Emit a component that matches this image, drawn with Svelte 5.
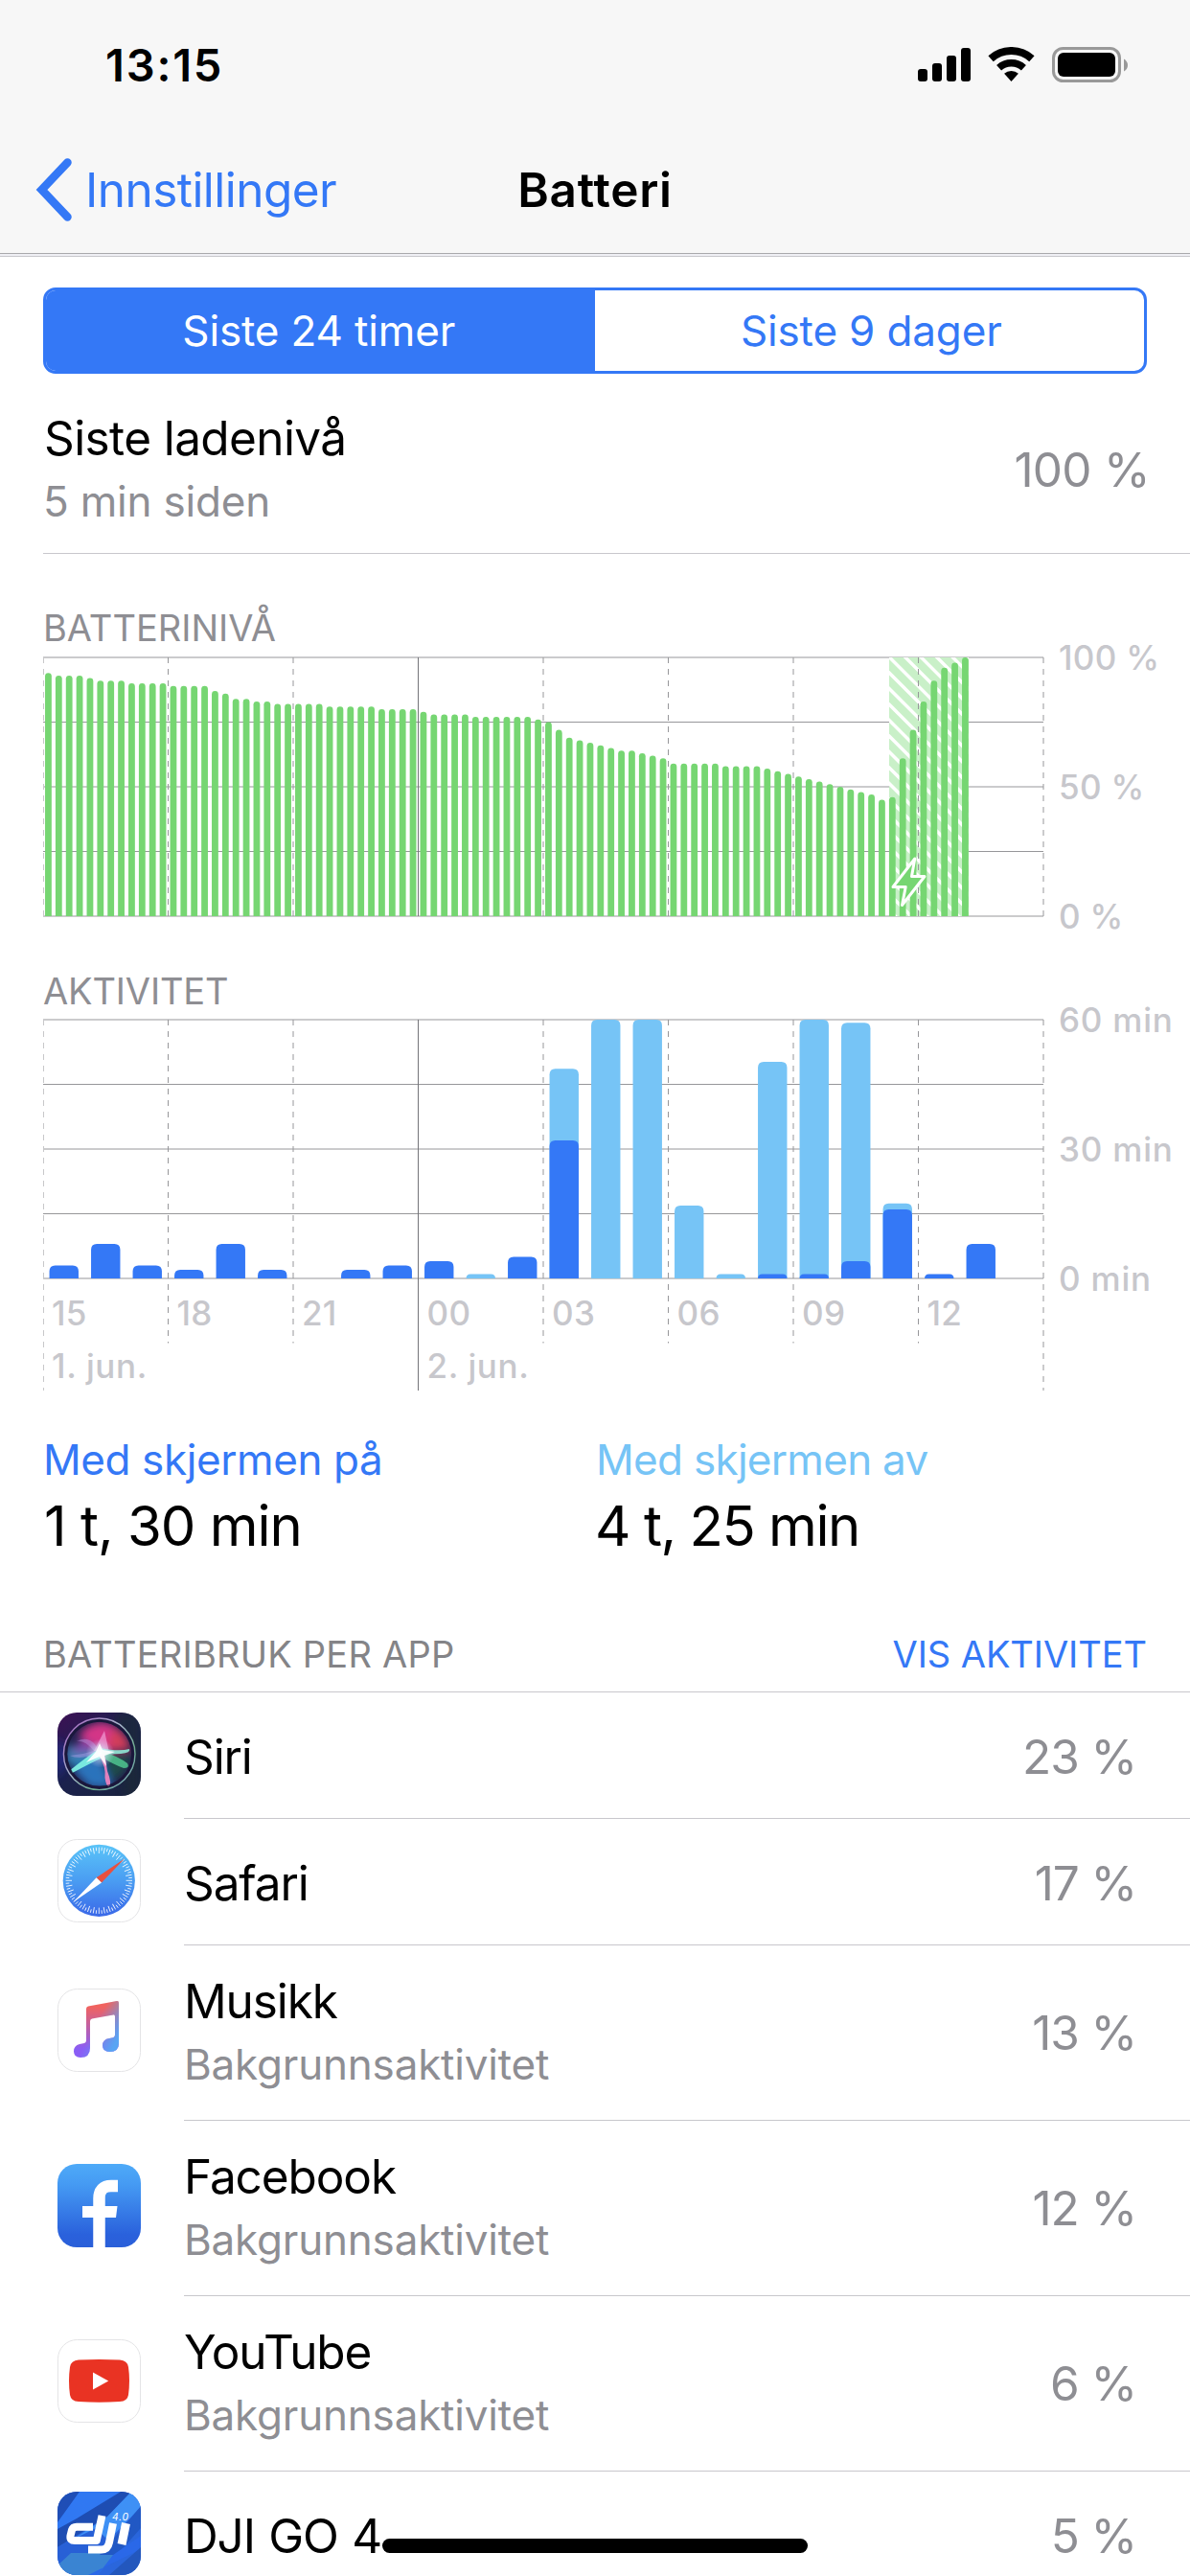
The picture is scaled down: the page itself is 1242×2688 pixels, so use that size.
<script>
	const LEFT = 45;
	const WIDTH = 1044;
	const HEIGHT = 270;

	// [level in percent, number of quarter-hours it lasted]
	const levelRuns = [
		[94, 1], [93, 3], [92, 1], [91, 3], [90, 4], [89, 4], [87, 1], [86, 1],
		[84, 2], [83, 2], [82, 5], [81, 5], [80, 4], [79, 1], [78, 4], [77, 6],
		[76, 1], [75, 1], [72, 1], [69, 1], [68, 1], [67, 1], [66, 1], [65, 1],
		[64, 2], [63, 1], [62, 1], [61, 1], [59, 5], [58, 4], [57, 1], [56, 1],
		[55, 1], [54, 1], [53, 1], [52, 1], [51, 1], [50, 1], [49, 1], [48, 1],
		[47, 1], [45, 1], [46, 1], [61, 1], [72, 1], [83, 1], [91, 1], [96, 1],
		[98, 1], [100, 1]
	];
	const levels = levelRuns.flatMap(([level, n]) => Array(n).fill(level));
	const slot = WIDTH / 96;
	const chargeStart = 928;
	const chargeEnd = 1011;

	// minutes per hour, starting at 15:00. total includes time with the screen off
	const activity = [
		{ on: 3, total: 3 },
		{ on: 8, total: 8 },
		{ on: 3, total: 3 },
		{ on: 2, total: 2 },
		{ on: 8, total: 8 },
		{ on: 2, total: 2 },
		{ on: 0, total: 0 },
		{ on: 2, total: 2 },
		{ on: 3, total: 3 },
		{ on: 4, total: 4 },
		{ on: 0, total: 1 },
		{ on: 5, total: 5 },
		{ on: 32, total: 48.6 },
		{ on: 0, total: 60 },
		{ on: 0, total: 60 },
		{ on: 0, total: 16.9 },
		{ on: 0, total: 1 },
		{ on: 1, total: 50.2 },
		{ on: 1, total: 60 },
		{ on: 4, total: 59.3 },
		{ on: 16, total: 17.4 },
		{ on: 1, total: 1 },
		{ on: 8, total: 8 }
	];
	const hourSlot = WIDTH / 24;

	const hours = ['15', '18', '21', '00', '03', '06', '09', '12'];
	const gridX = Array.from({ length: 9 }, (_, i) => LEFT + i * 130.5);

	const apps = [
		{ id: 'siri', name: 'Siri', share: 23 },
		{ id: 'safari', name: 'Safari', share: 17 },
		{ id: 'music', name: 'Musikk', share: 13, background: true },
		{ id: 'facebook', name: 'Facebook', share: 12, background: true },
		{ id: 'youtube', name: 'YouTube', share: 6, background: true },
		{ id: 'dji', name: 'DJI GO 4', share: 5 }
	];

	// bar with rounded top corners, standing on the base line
	function bar(x, base, w, h, radius) {
		const r = Math.min(radius, w / 2, h);
		const top = base - h;
		return `M${x} ${base}V${top + r}Q${x} ${top} ${x + r} ${top}H${x + w - r}Q${x + w} ${top} ${x + w} ${top + r}V${base}Z`;
	}
</script>

{#snippet rows(top)}
	{#each [0, 1, 2, 3, 4] as i}
		<line class="grid-line" x1={LEFT} x2={LEFT + WIDTH} y1={top + i * 67.5} y2={top + i * 67.5} />
	{/each}
{/snippet}

{#snippet columns(top, end, outerEnd)}
	{#each gridX as x, i}
		{#if i === 0}
			<line class="grid-dash first" x1={x + 0.5} x2={x + 0.5} y1={top} y2={outerEnd} />
		{:else if i !== 3}
			<line class="grid-dash" x1={x} x2={x} y1={top} y2={i === 8 ? outerEnd : end} />
		{/if}
	{/each}
{/snippet}

<div class="screen">
	<header>
		<div class="status-bar">
			<span class="time">13:15</span>
			<svg width="219" height="38" viewBox="0 0 219 38">
				<rect x="0" y="23" width="10" height="13" rx="3" />
				<rect x="15" y="17" width="10" height="19" rx="3" />
				<rect x="30" y="9" width="10" height="27" rx="3" />
				<rect x="45" y="1" width="10" height="35" rx="3" />
				<g transform="translate(73 0)">
					<path d="M3.1 12.2A32 32 0 0 1 45.9 12.2" fill="none" stroke="#000" stroke-width="8" />
					<path d="M11.6 21.7A19.3 19.3 0 0 1 37.4 21.7" fill="none" stroke="#000" stroke-width="7.5" />
					<path d="M24.5 36L17.1 27.8A11 11 0 0 1 31.9 27.8Z" />
				</g>
				<rect x="141.5" y="1.5" width="69" height="34" rx="10" fill="none" stroke="#999" stroke-width="3" />
				<rect x="146" y="6" width="60" height="25" rx="6" />
				<path d="M215 12.5Q219 15 219 19T215 25.5Z" fill="#999" />
			</svg>
		</div>
		<nav>
			<div class="back">
				<svg width="40" height="66" viewBox="0 0 40 66">
					<path d="M33.5 4.5L6.5 33L33.5 61.5" fill="none" stroke="#3478f6" stroke-width="8.5" stroke-linecap="round" />
				</svg>
				<span>Innstillinger</span>
			</div>
			<h1>Batteri</h1>
			<div></div>
		</nav>
	</header>
	<div class="header-gap"></div>

	<div class="segmented">
		<div class="segment active">Siste 24 timer</div>
		<div class="segment">Siste 9 dager</div>
	</div>

	<section class="last-charge">
		<div>
			<div class="title">Siste ladenivå</div>
			<div class="subtitle">5 min siden</div>
		</div>
		<div class="value">100 %</div>
	</section>

	<section class="charts">
		<h2>BATTERINIVÅ</h2>
		<svg class="chart" width="1242" height="300" viewBox="0 0 1242 300">
			<defs>
				<clipPath id="charging">
					<rect x={chargeStart} y="11" width={chargeEnd - chargeStart} height={HEIGHT} />
				</clipPath>
			</defs>
			{@render rows(11)}
			<g clip-path="url(#charging)">
				<rect x={chargeStart} y="11" width={chargeEnd - chargeStart} height={HEIGHT} fill="#c9f0c8" />
				{#each Array(22) as _, i}
					<line
						x1={chargeStart - 10}
						y1={-82 + i * 16.5}
						x2={chargeEnd + 10}
						y2={-62 + i * 16.5 + chargeEnd - chargeStart}
						stroke="#fff"
						stroke-width="3.4"
					/>
				{/each}
			</g>
			{@render columns(11, 281, 281)}
			{#each levels as level, i}
				<path class="level" d={bar(LEFT + (i + 0.5) * slot - 3.4, 281, 6.8, (level / 100) * HEIGHT, 3.4)} />
			{/each}
			<line class="midnight" x1="436.5" x2="436.5" y1="11" y2="281" />
			<path
				d="M954.8 221L951.5 239.5H965L941.5 269.5L945.2 250.5H932Z"
				fill="#76d672"
				stroke="#fff"
				stroke-width="3"
				stroke-linejoin="round"
			/>
			<text class="axis" x="1105" y="24">100 %</text>
			<text class="axis" x="1105" y="158.5">50 %</text>
			<text class="axis" x="1105" y="293.5">0 %</text>
		</svg>

		<h2 class="second">AKTIVITET</h2>
		<svg class="chart" width="1242" height="400" viewBox="0 0 1242 400">
			{@render rows(10)}
			{@render columns(10, 347.5, 397)}
			{#each activity as hour, i}
				{@const x = LEFT + (i + 0.5) * hourSlot - 15.2}
				{#if hour.total > hour.on}
					<path class="screen-off" d={bar(x, 280, 30.4, hour.total * 4.5, 6)} />
				{/if}
				{#if hour.on}
					<path class="screen-on" d={bar(x, 280, 30.4, hour.on * 4.5, 6)} />
				{/if}
			{/each}
			<line class="midnight" x1="436.5" x2="436.5" y1="10" y2="397" />
			<text class="axis minutes" x="1105" y="22.7">60 min</text>
			<text class="axis minutes" x="1105" y="157.5">30 min</text>
			<text class="axis minutes" x="1105" y="292.5">0 min</text>
			{#each hours as hour, i}
				<text class="axis" x={gridX[i] + 9} y="329">{hour}</text>
			{/each}
			<text class="axis date" x="54" y="384">1. jun.</text>
			<text class="axis date" x="445.5" y="384">2. jun.</text>
		</svg>
	</section>

	<section class="totals">
		<div>
			<div class="label on">Med skjermen på</div>
			<div class="amount">1 t, 30 min</div>
		</div>
		<div>
			<div class="label off">Med skjermen av</div>
			<div class="amount wide">4 t, 25 min</div>
		</div>
	</section>

	<div class="list-header">
		<span>BATTERIBRUK PER APP</span>
		<span class="link">VIS AKTIVITET</span>
	</div>

	<ul>
		{#each apps as app}
			<li class:tall={app.background}>
				<svg class="icon" width="87" height="87" viewBox="0 0 87 87">
					{#if app.id === 'siri'}
						<defs>
							<linearGradient id="siri-bg" x1="0.1" y1="0" x2="0.8" y2="1">
								<stop offset="0" stop-color="#3a1254" />
								<stop offset="0.45" stop-color="#1c2150" />
								<stop offset="1" stop-color="#1a2340" />
							</linearGradient>
							<linearGradient id="siri-ring" x1="0" y1="0" x2="1" y2="1">
								<stop offset="0" stop-color="#a65cc0" />
								<stop offset="0.45" stop-color="#a8b8cc" />
								<stop offset="0.7" stop-color="#6fae90" />
								<stop offset="1" stop-color="#7fa6c8" />
							</linearGradient>
							<radialGradient id="siri-glow">
								<stop offset="0" stop-color="#fff" stop-opacity="1" />
								<stop offset="0.35" stop-color="#d8f4ff" stop-opacity="0.7" />
								<stop offset="1" stop-color="#d8c8ff" stop-opacity="0" />
							</radialGradient>
							<filter id="siri-soft" x="-30%" y="-30%" width="160%" height="160%">
								<feGaussianBlur stdDeviation="4" />
							</filter>
							<clipPath id="siri-tile"><rect width="87" height="87" rx="20" /></clipPath>
							<clipPath id="siri-disc"><circle cx="43.7" cy="43.3" r="33.5" /></clipPath>
						</defs>
						<g clip-path="url(#siri-tile)">
							<rect width="87" height="87" fill="url(#siri-bg)" />
							<path d="M87 0V87H70L60 0Z" fill="#1c2b38" opacity="0.7" filter="url(#siri-soft)" />
							<path d="M0 25L12 45L0 70Z" fill="#242a86" filter="url(#siri-soft)" />
						</g>
						<circle cx="43.7" cy="43.3" r="37" fill="#1d1a40" />
						<g clip-path="url(#siri-disc)">
							<rect width="87" height="87" fill="#22204e" />
							<g filter="url(#siri-soft)">
								<path d="M22 24Q34 8 52 11Q72 18 76 38L48 42Z" fill="#d43487" />
								<path d="M58 16Q74 24 76 39L52 38Z" fill="#d23e58" />
								<path d="M10 34L44 42L24 58L8 52Z" fill="#2a83b4" />
								<path d="M16 60L44 44L58 78H34Z" fill="#2a73bc" />
								<path d="M48 44L78 44L68 64L56 72Z" fill="#1f4c48" />
								<path d="M26 28L44 40L12 44Z" fill="#7e4cae" />
							</g>
						</g>
						<path d="M20 30Q36 22 44 42Q24 50 13 45Q26 44 38 40Q28 28 20 30Z" fill="#b9a0ee" opacity="0.4" />
						<path d="M49 19L54 42L38 40Z" fill="#f3a6dc" opacity="0.65" />
						<path d="M44 37Q64 41 75 38Q77 42 66 43Q54 43 44 46Z" fill="#8ff2dd" opacity="0.85" />
						<path d="M42 39Q32 45 14 59.5L15.5 63Q34 53 47 47Z" fill="#7deee2" opacity="0.95" />
						<path d="M46 40Q64 46 73 53Q76 58 69 58Q58 54 45 46Z" fill="#4fc48f" opacity="0.85" />
						<path d="M43 44Q51 57 49.5 68Q51 78 54 77Q57 74 52 61Q51 52 49 43Z" fill="#ec83bf" opacity="0.95" />
						<circle cx="44.5" cy="42.5" r="15" fill="url(#siri-glow)" opacity="0.85" />
						<path d="M44 32L47 39L60 41L49 45L51 56L44 46L30 52L40 41Z" fill="#fff" opacity="0.9" />
						<circle cx="43.7" cy="43.3" r="37.3" fill="none" stroke="url(#siri-ring)" stroke-width="1.4" />
						<circle cx="43.7" cy="43.3" r="34.5" fill="none" stroke="#191638" stroke-width="2" opacity="0.6" />
					{:else if app.id === 'safari'}
						<defs>
							<linearGradient id="safari-bg" x1="0" y1="0" x2="0" y2="1">
								<stop offset="0" stop-color="#5ac4f8" />
								<stop offset="0.5" stop-color="#4a9df2" />
								<stop offset="1" stop-color="#3a68e8" />
							</linearGradient>
						</defs>
						<rect class="tile" x="0.5" y="0.5" width="86" height="86" rx="20" />
						<circle cx="43.3" cy="43.3" r="37.6" fill="url(#safari-bg)" />
						{#each Array(72) as _, i}
							<line
								x1="43.3"
								x2="43.3"
								y1="8.6"
								y2={i % 2 ? 12.2 : 15}
								stroke="#fff"
								stroke-width="0.9"
								opacity="0.9"
								transform="rotate({i * 5} 43.3 43.3)"
							/>
						{/each}
						<path d="M70 20.5L40.6 40.2L46 45.5Z" fill="#e9503f" />
						<path d="M16.5 65.8L40.6 40.2L46 45.5Z" fill="#fff" />
					{:else if app.id === 'music'}
						<defs>
							<linearGradient id="music-a" gradientUnits="userSpaceOnUse" x1="0" y1="13" x2="0" y2="72">
								<stop offset="0.1" stop-color="#f1635f" />
								<stop offset="0.55" stop-color="#b25fb8" />
								<stop offset="0.85" stop-color="#8a5df5" />
							</linearGradient>
							<linearGradient id="music-b" gradientUnits="userSpaceOnUse" x1="25" y1="65" x2="49.4" y2="77.9">
								<stop offset="0" stop-color="#58a5f3" stop-opacity="0" />
								<stop offset="1" stop-color="#58a5f3" />
							</linearGradient>
						</defs>
						<rect class="tile" x="0.5" y="0.5" width="86" height="86" rx="20" />
						{#each ['a', 'b'] as layer}
							<path
								d="M30 21Q30 19 32 18.5L62 13Q64 12.7 64 15V57Q64 66 54.5 66Q47 66 47 59.5Q47 53 54 52L58 51.2Q60 50.8 60 48.5V29Q60 27 58 27.4L36 31.5Q34 32 34 34V62Q34 72 24 72Q17 72 17 65.5Q17 59.5 23 58L28 57Q30 56.5 30 54Z"
								fill="url(#music-{layer})"
							/>
						{/each}
					{:else if app.id === 'facebook'}
						<defs>
							<linearGradient id="facebook-bg" x1="0" y1="0" x2="0" y2="1">
								<stop offset="0" stop-color="#4eaaf8" />
								<stop offset="0.25" stop-color="#459af3" />
								<stop offset="0.85" stop-color="#2a61dc" />
								<stop offset="1" stop-color="#2a5fd9" />
							</linearGradient>
						</defs>
						<rect width="87" height="87" rx="20" fill="url(#facebook-bg)" />
						<path d="M43.5 87V36Q43.5 23 56 23H63" fill="none" stroke="#fff" stroke-width="12.5" />
						<path d="M26 44H62.5L61 56H26Z" fill="#fff" />
					{:else if app.id === 'youtube'}
						<rect class="tile" x="0.5" y="0.5" width="86" height="86" rx="20" />
						<path
							d="M22 21.5Q43.5 20.5 65 21.5Q73 22 74 29Q76 43 74 58Q73 64.5 65 65Q43.5 66.5 22 65Q14 64.5 13 58Q11 43 13 29Q14 22 22 21.5Z"
							fill="#e93323"
						/>
						<path d="M37 34.5L53.2 43.5L37 52.5Z" fill="#fff" />
					{:else}
						<defs>
							<clipPath id="dji-tile"><rect width="87" height="87" rx="20" /></clipPath>
						</defs>
						<g clip-path="url(#dji-tile)">
							<rect width="87" height="87" fill="#2a66dc" />
							<path d="M0 0H23L0 34Z" fill="#1f4eb6" />
							<path d="M23 0H68L20 30L0 40V32Z" fill="#3078f2" />
							<path d="M66 0H77L52 26L0 58V39L20 28Z" fill="#1e4db2" />
							<path d="M77 0H87V16L50 54H10L52 26Z" fill="#3e90f5" />
							<path d="M0 58L40 38L58 56L34 87H0Z" fill="#2860d6" />
							<path d="M0 77L14 64H60L42 87H0Z" fill="#3a84d2" />
							<path d="M87 15V38L62 66H44Z" fill="#2158c4" />
							<path d="M58 66L87 46V60L32 87H42Z" fill="#2a68e8" />
							<path d="M87 58V87H54Z" fill="#2357bd" />
						</g>
						<g fill="none" stroke="#fff">
							<path d="M46.5 25L40.8 51H18Q12.5 51 13.5 46L15 40Q16 36.8 20 36.8H37" stroke-width="8" stroke-linejoin="round" />
							<path d="M58 33L54 53Q52.5 60.5 46 60.5H32" stroke-width="8" />
							<path d="M71.5 33L67 55" stroke-width="9" />
						</g>
						<text class="dji-version" x="57" y="30">4.0</text>
					{/if}
				</svg>
				<div class="row">
					<div>
						<div class="name">{app.name}</div>
						{#if app.background}
							<div class="subtitle">Bakgrunnsaktivitet</div>
						{/if}
					</div>
					<div class="value share">{app.share} %</div>
				</div>
			</li>
		{/each}
	</ul>

	<div class="home-indicator"></div>
</div>

<style>
	:global(body) {
		margin: 0;
		background: #fff;
	}

	.screen {
		position: relative;
		width: 1242px;
		height: 2688px;
		overflow: hidden;
		background: #fff;
		color: #000;
		font-family: Inter, 'Liberation Sans', sans-serif;
		font-size: 49.5px;
	}

	header {
		height: 264px;
		background: #f7f7f7;
		border-bottom: 1px solid #a9a9ac;
	}

	.header-gap {
		height: 2px;
		background: #efeff4;
		border-bottom: 1px solid #c8c7cc;
	}

	.status-bar {
		box-sizing: border-box;
		height: 132px;
		padding: 4px 65px 0 110px;
		display: flex;
		align-items: center;
		justify-content: space-between;
	}

	.time {
		margin-top: -2px;
		font-size: 47px;
		font-weight: 600;
		letter-spacing: 1.8px;
	}

	nav {
		height: 132px;
		display: grid;
		grid-template-columns: 1fr auto 1fr;
		align-items: center;
	}

	.back {
		display: flex;
		align-items: center;
		gap: 12px;
		padding-left: 37px;
		color: #3478f6;
		letter-spacing: -0.54px;
	}

	h1 {
		margin: 0;
		font-size: 49.5px;
		font-weight: 600;
		letter-spacing: 0.75px;
	}

	.segmented {
		box-sizing: border-box;
		height: 90px;
		margin: 32px 45px 0;
		display: flex;
		border: 3px solid #3478f6;
		border-radius: 13px;
		overflow: hidden;
	}

	.segment {
		box-sizing: border-box;
		flex: 1;
		display: flex;
		align-items: center;
		justify-content: center;
		padding-left: 4px;
		font-size: 44px;
		letter-spacing: -0.15px;
		color: #3478f6;
	}

	.segment.active {
		padding: 0 3px 0 0;
		background: #3478f6;
		color: #fff;
	}

	.last-charge {
		box-sizing: border-box;
		height: 188px;
		margin-left: 45px;
		padding: 12px 42px 0 0;
		display: flex;
		align-items: center;
		justify-content: space-between;
		border-bottom: 1px solid #c8c7cc;
	}

	.title {
		line-height: 66px;
		letter-spacing: -0.6px;
		padding-left: 1px;
	}

	.subtitle {
		font-size: 44px;
		line-height: 66px;
		letter-spacing: -0.2px;
		color: #8e8e93;
	}

	.value {
		color: #8e8e93;
		letter-spacing: -0.7px;
	}

	.value.share {
		letter-spacing: -1.1px;
	}

	h2 {
		margin: 57px 0 0 45px;
		font-size: 38px;
		font-weight: 400;
		line-height: 40px;
		color: #8e8e93;
	}

	h2.second {
		margin-top: 39px;
		letter-spacing: -0.16px;
	}

	.chart {
		display: block;
		overflow: visible;
	}

	.grid-line {
		stroke: #97979a;
		stroke-width: 1;
	}

	.grid-dash {
		stroke: #97979a;
		stroke-width: 1;
		stroke-dasharray: 6 6;
	}

	.grid-dash.first {
		stroke: #c8c8ca;
	}

	.midnight {
		stroke: #747479;
		stroke-width: 1;
	}

	.level {
		fill: #76d672;
	}

	.screen-on {
		fill: #3478f6;
	}

	.screen-off {
		fill: #76c4f6;
	}

	.axis {
		font-size: 35px;
		font-weight: 500;
		letter-spacing: 0.3px;
		fill: #c7c7cc;
	}

	.axis.minutes {
		letter-spacing: 0.8px;
	}

	.axis.date {
		letter-spacing: 0.6px;
	}

	.totals {
		display: grid;
		grid-template-columns: 576px 1fr;
		margin: 41px 0 0 45px;
	}

	.label {
		font-size: 44px;
		line-height: 56px;
		letter-spacing: -0.4px;
	}

	.label.on {
		color: #3478f6;
	}

	.label.off {
		color: #76c4f6;
		letter-spacing: -0.7px;
		padding-left: 1px;
	}

	.amount {
		margin-top: 3px;
		font-size: 58px;
		line-height: 76px;
		letter-spacing: -1px;
		padding-left: 1px;
	}

	.amount.wide {
		letter-spacing: -1.45px;
		padding-left: 0;
	}

	.list-header {
		display: flex;
		justify-content: space-between;
		padding: 76px 45px 19px;
		border-bottom: 1px solid #c8c7cc;
		font-size: 38px;
		line-height: 40px;
		letter-spacing: 0.22px;
		color: #848487;
	}

	.link {
		color: #3478f6;
		letter-spacing: -0.06px;
	}

	ul {
		margin: 0;
		padding: 0;
		list-style: none;
	}

	li {
		height: 132px;
		display: flex;
		align-items: center;
	}

	li.tall {
		height: 183px;
	}

	.icon {
		flex: none;
		margin: -3px 45px 0 60px;
	}

	li.tall .icon {
		margin-top: -6px;
	}

	.tile {
		fill: #fff;
		stroke: #e4e4e6;
	}

	.row {
		box-sizing: border-box;
		flex: 1;
		height: 100%;
		display: flex;
		align-items: center;
		justify-content: space-between;
		padding: 2px 56px 0 0;
		border-bottom: 1px solid #c8c7cc;
	}

	.tall .row {
		padding-top: 0;
	}

	.name {
		line-height: 66px;
		letter-spacing: -1.1px;
		word-spacing: 1.5px;
	}

	.dji-version {
		font-size: 10.3px;
		font-style: italic;
		letter-spacing: 0.7px;
		fill: #fff;
	}

	.home-indicator {
		position: absolute;
		left: 399px;
		bottom: 24px;
		width: 444px;
		height: 15px;
		border-radius: 8px;
		background: #000;
	}
</style>
